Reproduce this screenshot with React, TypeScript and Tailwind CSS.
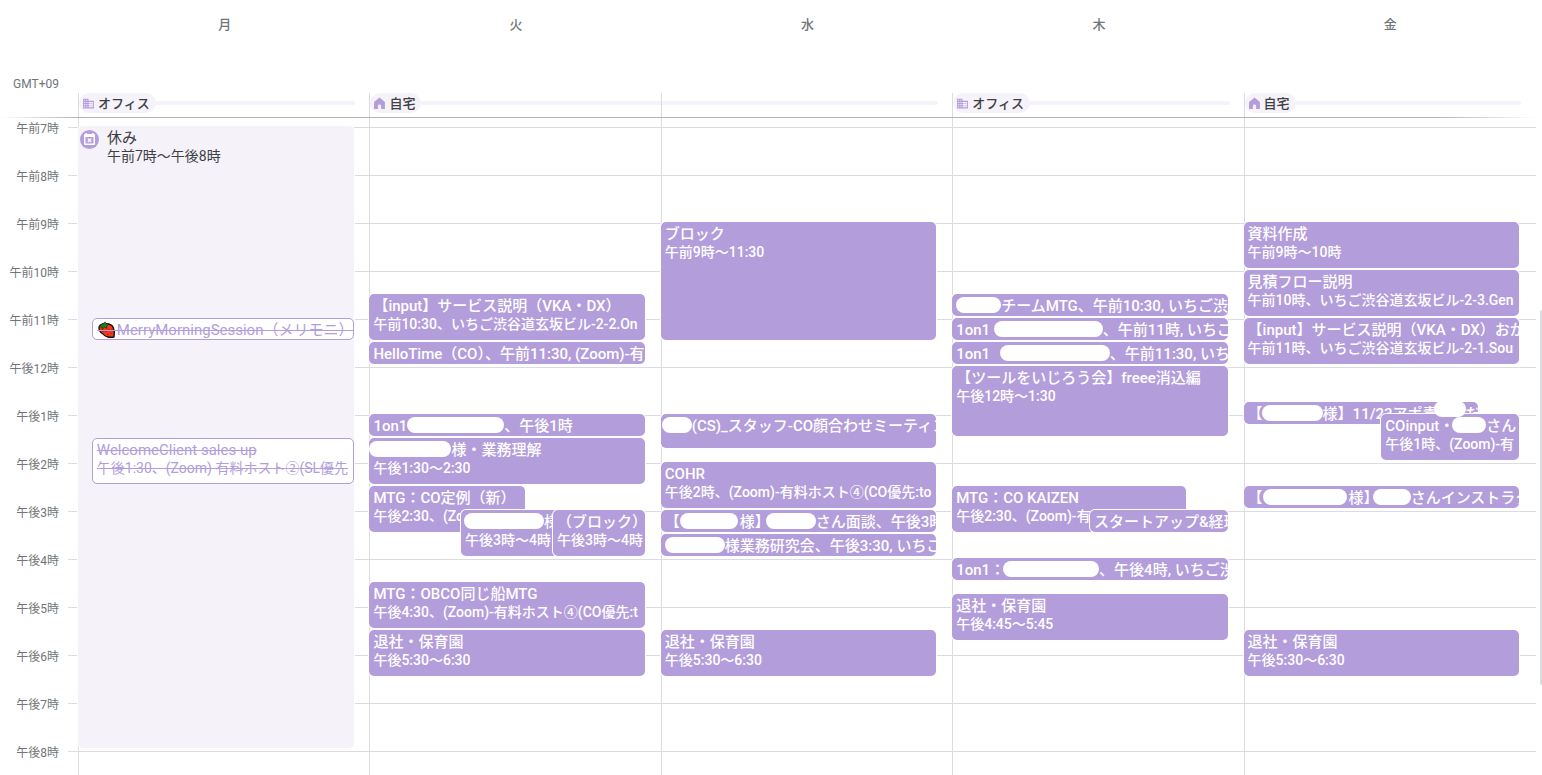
import type { CSSProperties, ReactNode } from "react";

const START_HOUR = 7;
const QUARTERS = 54;

type CalendarEvent = {
  start: number;
  end: number;
  title: ReactNode;
  detail?: ReactNode;
  left?: number;
  right?: number;
  declined?: boolean;
};

type Day = {
  name: string;
  place?: string;
  icon?: "office" | "home";
  connectsNext?: boolean;
  away?: boolean;
  events: CalendarEvent[];
};

/** White pill that hides a personal name inside an event. */
function Mask({ className }: { className: string }) {
  return <span className={`inline-block h-4 rounded-full bg-white align-[-2px] ${className}`} />;
}

function OfficeIcon() {
  return (
    <svg viewBox="0 0 24 24" className="size-[13px] shrink-0 fill-[#b39ddb]" aria-hidden="true">
      <path d="M12 7V3H2v18h20V7H12zM6 19H4v-2h2v2zm0-4H4v-2h2v2zm0-4H4V9h2v2zm0-4H4V5h2v2zm4 12H8v-2h2v2zm0-4H8v-2h2v2zm0-4H8V9h2v2zm0-4H8V5h2v2zm10 12h-8v-2h2v-2h-2v-2h2v-2h-2V9h8v10zm-2-8h-2v2h2v-2zm0 4h-2v2h2v-2z" />
    </svg>
  );
}

function HomeIcon() {
  return (
    <svg viewBox="0 0 24 24" className="size-[13px] shrink-0 fill-[#b39ddb]" aria-hidden="true">
      <path d="M12 1 2 9v13h7v-6q0-2 3-2t3 2v6h7V9z" />
    </svg>
  );
}

function AwayIcon() {
  return (
    <svg viewBox="0 0 19 19" className="mt-px size-[19px] shrink-0" aria-hidden="true">
      <circle cx="9.500" cy="9.500" r="9.500" fill="#b39ddb" />
      <path
        fill="#fff"
        fillRule="evenodd"
        d="M5.500 3H7v1h5V3h1.500v1h.5a1 1 0 0 1 1 1v9a1 1 0 0 1-1 1H5a1 1 0 0 1-1-1V5a1 1 0 0 1 1-1h.5zM5.500 7v6.500h8V7z"
      />
      <path d="m7.700 8.500 3.600 3.600m0-3.600-3.600 3.600" stroke="#fff" strokeWidth="1.300" />
    </svg>
  );
}

function Strawberry() {
  return (
    <svg viewBox="0 0 20 18" className="inline-block h-[18px] w-5 align-top" aria-hidden="true">
      <path d="M2 6c1-3 6-4 10-3 5 1 6 6 5 13-4 1-9 0-11-3C3 11 1.500 9 2 6z" fill="#f03a17" stroke="#111" strokeWidth="1.300" />
      <path d="M2 6 4 3.500l2-.5L8 .8l1.500 2.200 2 .5-2 2 .500 2-2.500-1.500L5.500 8.500 5 6z" fill="#1d7d21" stroke="#111" strokeWidth=".5" />
      <path d="M6 10v1m3-1v1m3-3v1m3-1v1m-4 4v1m3-2v1m0 2v1m-5-1v1" stroke="#9c1509" strokeWidth="1" />
      <path d="M0 9.500h20" stroke="#b39ddb" strokeWidth="1" />
    </svg>
  );
}

const days: Day[] = [
  {
    name: "月",
    place: "オフィス",
    icon: "office",
    away: true,
    events: [
      { start: 11, end: 11.5, left: 5, declined: true, title: <><Strawberry />MerryMorningSession（メリモニ）</> },
      { start: 13.5, end: 14.5, left: 5, declined: true, title: "WelcomeClient sales up", detail: "午後1:30、(Zoom) 有料ホスト②(SL優先" },
    ],
  },
  {
    name: "火",
    place: "自宅",
    icon: "home",
    connectsNext: true,
    events: [
      { start: 10.5, end: 11.5, title: "【input】サービス説明（VKA・DX）", detail: "午前10:30、いちご渋谷道玄坂ビル-2-2.On" },
      { start: 11.5, end: 12, title: "HelloTime（CO）、午前11:30, (Zoom)-有" },
      { start: 13, end: 13.5, title: <>1on1<Mask className="w-[97px]" />、午後1時</> },
      { start: 13.5, end: 14.5, title: <><Mask className="-ml-1 w-[82px]" />様・業務理解</>, detail: "午後1:30〜2:30" },
      { start: 14.5, end: 15.5, right: 43.5, title: "MTG：CO定例（新）", detail: "午後2:30、(Zoom)" },
      { start: 15, end: 16, left: 33.3, title: <><Mask className="-ml-px w-20" />様</>, detail: "午後3時〜4時" },
      { start: 15, end: 16, left: 66.7, title: "（ブロック）", detail: "午後3時〜4時" },
      { start: 16.5, end: 17.5, title: "MTG：OBCO同じ船MTG", detail: "午後4:30、(Zoom)-有料ホスト④(CO優先:t" },
      { start: 17.5, end: 18.5, title: "退社・保育園", detail: "午後5:30〜6:30" },
    ],
  },
  {
    name: "水",
    events: [
      { start: 9, end: 11.5, title: "ブロック", detail: "午前9時〜11:30" },
      { start: 13, end: 13.75, title: <><Mask className="-ml-[3px] w-[30px]" />(CS)_スタッフ-CO顔合わせミーティン</> },
      { start: 14, end: 15, title: "COHR", detail: "午後2時、(Zoom)-有料ホスト④(CO優先:to" },
      { start: 15, end: 15.5, title: <>【<Mask className="mr-0.5 w-[58px]" />様】<Mask className="-ml-1 w-[50px]" />さん面談、午後3時</> },
      { start: 15.5, end: 16, title: <><Mask className="w-[60px]" />様業務研究会、午後3:30, いちご</> },
      { start: 17.5, end: 18.5, title: "退社・保育園", detail: "午後5:30〜6:30" },
    ],
  },
  {
    name: "木",
    place: "オフィス",
    icon: "office",
    events: [
      { start: 10.5, end: 11, title: <><Mask className="w-[45px]" />チームMTG、午前10:30, いちご渋</> },
      { start: 11, end: 11.5, title: <>1on1 <Mask className="w-[109px]" />、午前11時, いちご</> },
      { start: 11.5, end: 12, title: <>1on1 <Mask className="ml-1.5 w-[110px]" />、午前11:30, いち</> },
      { start: 12, end: 13.5, title: "【ツールをいじろう会】freee消込編", detail: "午後12時〜1:30" },
      { start: 14.5, end: 15.5, right: 15, title: "MTG：CO KAIZEN", detail: "午後2:30、(Zoom)-有料" },
      { start: 15, end: 15.5, left: 50, title: "スタートアップ&経理" },
      { start: 16, end: 16.5, title: <>1on1：<Mask className="-ml-0.5 w-24" />、午後4時, いちご渋</> },
      { start: 16.75, end: 17.75, title: "退社・保育園", detail: "午後4:45〜5:45" },
    ],
  },
  {
    name: "金",
    place: "自宅",
    icon: "home",
    events: [
      { start: 9, end: 10, title: "資料作成", detail: "午前9時〜10時" },
      { start: 10, end: 11, title: "見積フロー説明", detail: "午前10時、いちご渋谷道玄坂ビル-2-3.Gen" },
      { start: 11, end: 12, title: "【input】サービス説明（VKA・DX）おか", detail: "午前11時、いちご渋谷道玄坂ビル-2-1.Sou" },
      { start: 12.75, end: 13.25, right: 15, title: <>【<Mask className="-ml-px w-[61px]" />様】11/23アポ責<Mask className="-ml-1 w-8 -translate-y-1" />だち</> },
      { start: 13, end: 14, left: 50, title: <>COinput・<Mask className="-ml-0.5 w-[34px]" />さん</>, detail: "午後1時、(Zoom)-有" },
      { start: 14.5, end: 15, title: <>【<Mask className="mr-0.5 w-[84px]" />様】<Mask className="-ml-1.5 w-[38px]" />さんインストラク</> },
      { start: 17.5, end: 18.5, title: "退社・保育園", detail: "午後5:30〜6:30" },
    ],
  },
];

const hours = ["午前7時", "午前8時", "午前9時", "午前10時", "午前11時", "午後12時", "午後1時", "午後2時", "午後3時", "午後4時", "午後5時", "午後6時", "午後7時", "午後8時"];

function placeOnGrid(start: number, end: number, left = 0, right = 0): CSSProperties {
  return {
    gridRow: `${(start - START_HOUR) * 4 + 1} / ${(end - START_HOUR) * 4 + 1}`,
    marginLeft: `${left}%`,
    marginRight: `${right}%`,
  };
}

function EventCard({ event }: { event: CalendarEvent }) {
  const tone = event.declined
    ? "border border-[#b39ddb] bg-white text-[#b39ddb] line-through"
    : "bg-[#b39ddb] font-medium text-white ring-1 ring-white pt-px";
  return (
    <button
      type="button"
      style={placeOnGrid(event.start, event.end, event.left, event.right)}
      className={`col-start-1 mb-0.5 flex min-w-0 flex-col items-start justify-start overflow-hidden rounded-[5px] pl-1 text-left leading-[18px] whitespace-nowrap ${tone}`}
    >
      <span className="block h-[18px] pt-0.5 text-[15px] leading-[18px]">{event.title}</span>
      {event.detail && <span className="block pt-0.5 text-sm leading-[18px]">{event.detail}</span>}
    </button>
  );
}

export default function App() {
  return (
    <main className="relative flex h-screen min-h-[775px] flex-col overflow-hidden bg-white pr-1.5 font-[Roboto,'Noto_Sans_CJK_JP',sans-serif] text-[#3c4043]">
      <header className="flex h-[93px] shrink-0">
        <div className="flex w-[79px] shrink-0 items-end justify-end pr-5 pb-px text-xs text-[#70757a]">GMT+09</div>
        {days.map((day) => (
          <h2 key={day.name} className="flex-1 pt-4 text-center text-[13px] leading-[18px] font-medium text-[#70757a]">
            {day.name}
          </h2>
        ))}
      </header>

      <section aria-label="勤務場所" className="grid h-6 shrink-0 grid-cols-5 pr-px pl-[78px]">
        {days.map((day) => (
          <div key={day.name} className={`flex h-6 min-w-0 items-start border-l border-[#dadce0] ${day.connectsNext ? "" : "pr-[14px]"}`}>
            {day.place && (
              <button type="button" className="flex h-5 shrink-0 items-center gap-[3px] rounded-full bg-[#f5f2fa] pt-px pr-1.5 pl-[3px] text-[13px] leading-[18px] font-medium">
                {day.icon === "office" ? <OfficeIcon /> : <HomeIcon />}
                {day.place}
              </button>
            )}
            <span className={`mt-2 h-1 flex-1 bg-[#f5f2fa] ${day.connectsNext ? "" : "rounded-r-full"}`} />
          </div>
        ))}
      </section>

      <div className="h-px shrink-0 bg-linear-to-r from-transparent via-[#b4b4b4] via-5% to-[#b4b4b4]">
        <div className="ml-auto h-full w-24 bg-linear-to-r from-transparent to-white" />
      </div>

      <section aria-label="予定" className="grid shrink-0 grid-cols-[68px_1fr]">
        <ol className="pt-px text-right text-xs leading-4 text-[#70757a]">
          {hours.map((hour) => (
            <li key={hour} className="h-12 pt-[2px] pr-[9px]">{hour}</li>
          ))}
        </ol>
        <div className="grid">
          <div className="col-start-1 row-start-1 pt-[9px]">
            {hours.map((hour) => (
              <div key={hour} className="h-12 border-t border-[#dadce0]" />
            ))}
          </div>
          <div className="col-start-1 row-start-1 grid grid-cols-5 pr-px pl-2.5">
            {days.map((day) => (
              <div key={day.name} className="min-w-0 border-l border-[#dadce0] pt-2">
                <div
                  className={`-ml-px grid grid-cols-[minmax(0,1fr)] ${day.away ? "mr-[15px]" : "mr-4"}`}
                  style={{ gridTemplateRows: `repeat(${QUARTERS}, 12px)` }}
                >
                  {day.away && (
                    <button
                      type="button"
                      style={placeOnGrid(7, 20)}
                      className="col-start-1 mb-0.5 flex items-start gap-2 rounded-[5px] bg-[#f5f2fa] pt-[3px] pl-0.5 text-left text-sm leading-[18px] ring-1 ring-white"
                    >
                      <AwayIcon />
                      <span className="flex flex-col">
                        <span className="text-[15px] leading-[18px]">休み</span>
                        <span>午前7時〜午後8時</span>
                      </span>
                    </button>
                  )}
                  {day.events.map((event) => (
                    <EventCard key={`${event.start}-${event.left ?? 0}`} event={event} />
                  ))}
                </div>
              </div>
            ))}
          </div>
        </div>
      </section>

      <div className="absolute top-[310px] right-0 h-[375px] w-0.5 rounded-l bg-[#dadce0]" />
    </main>
  );
}
